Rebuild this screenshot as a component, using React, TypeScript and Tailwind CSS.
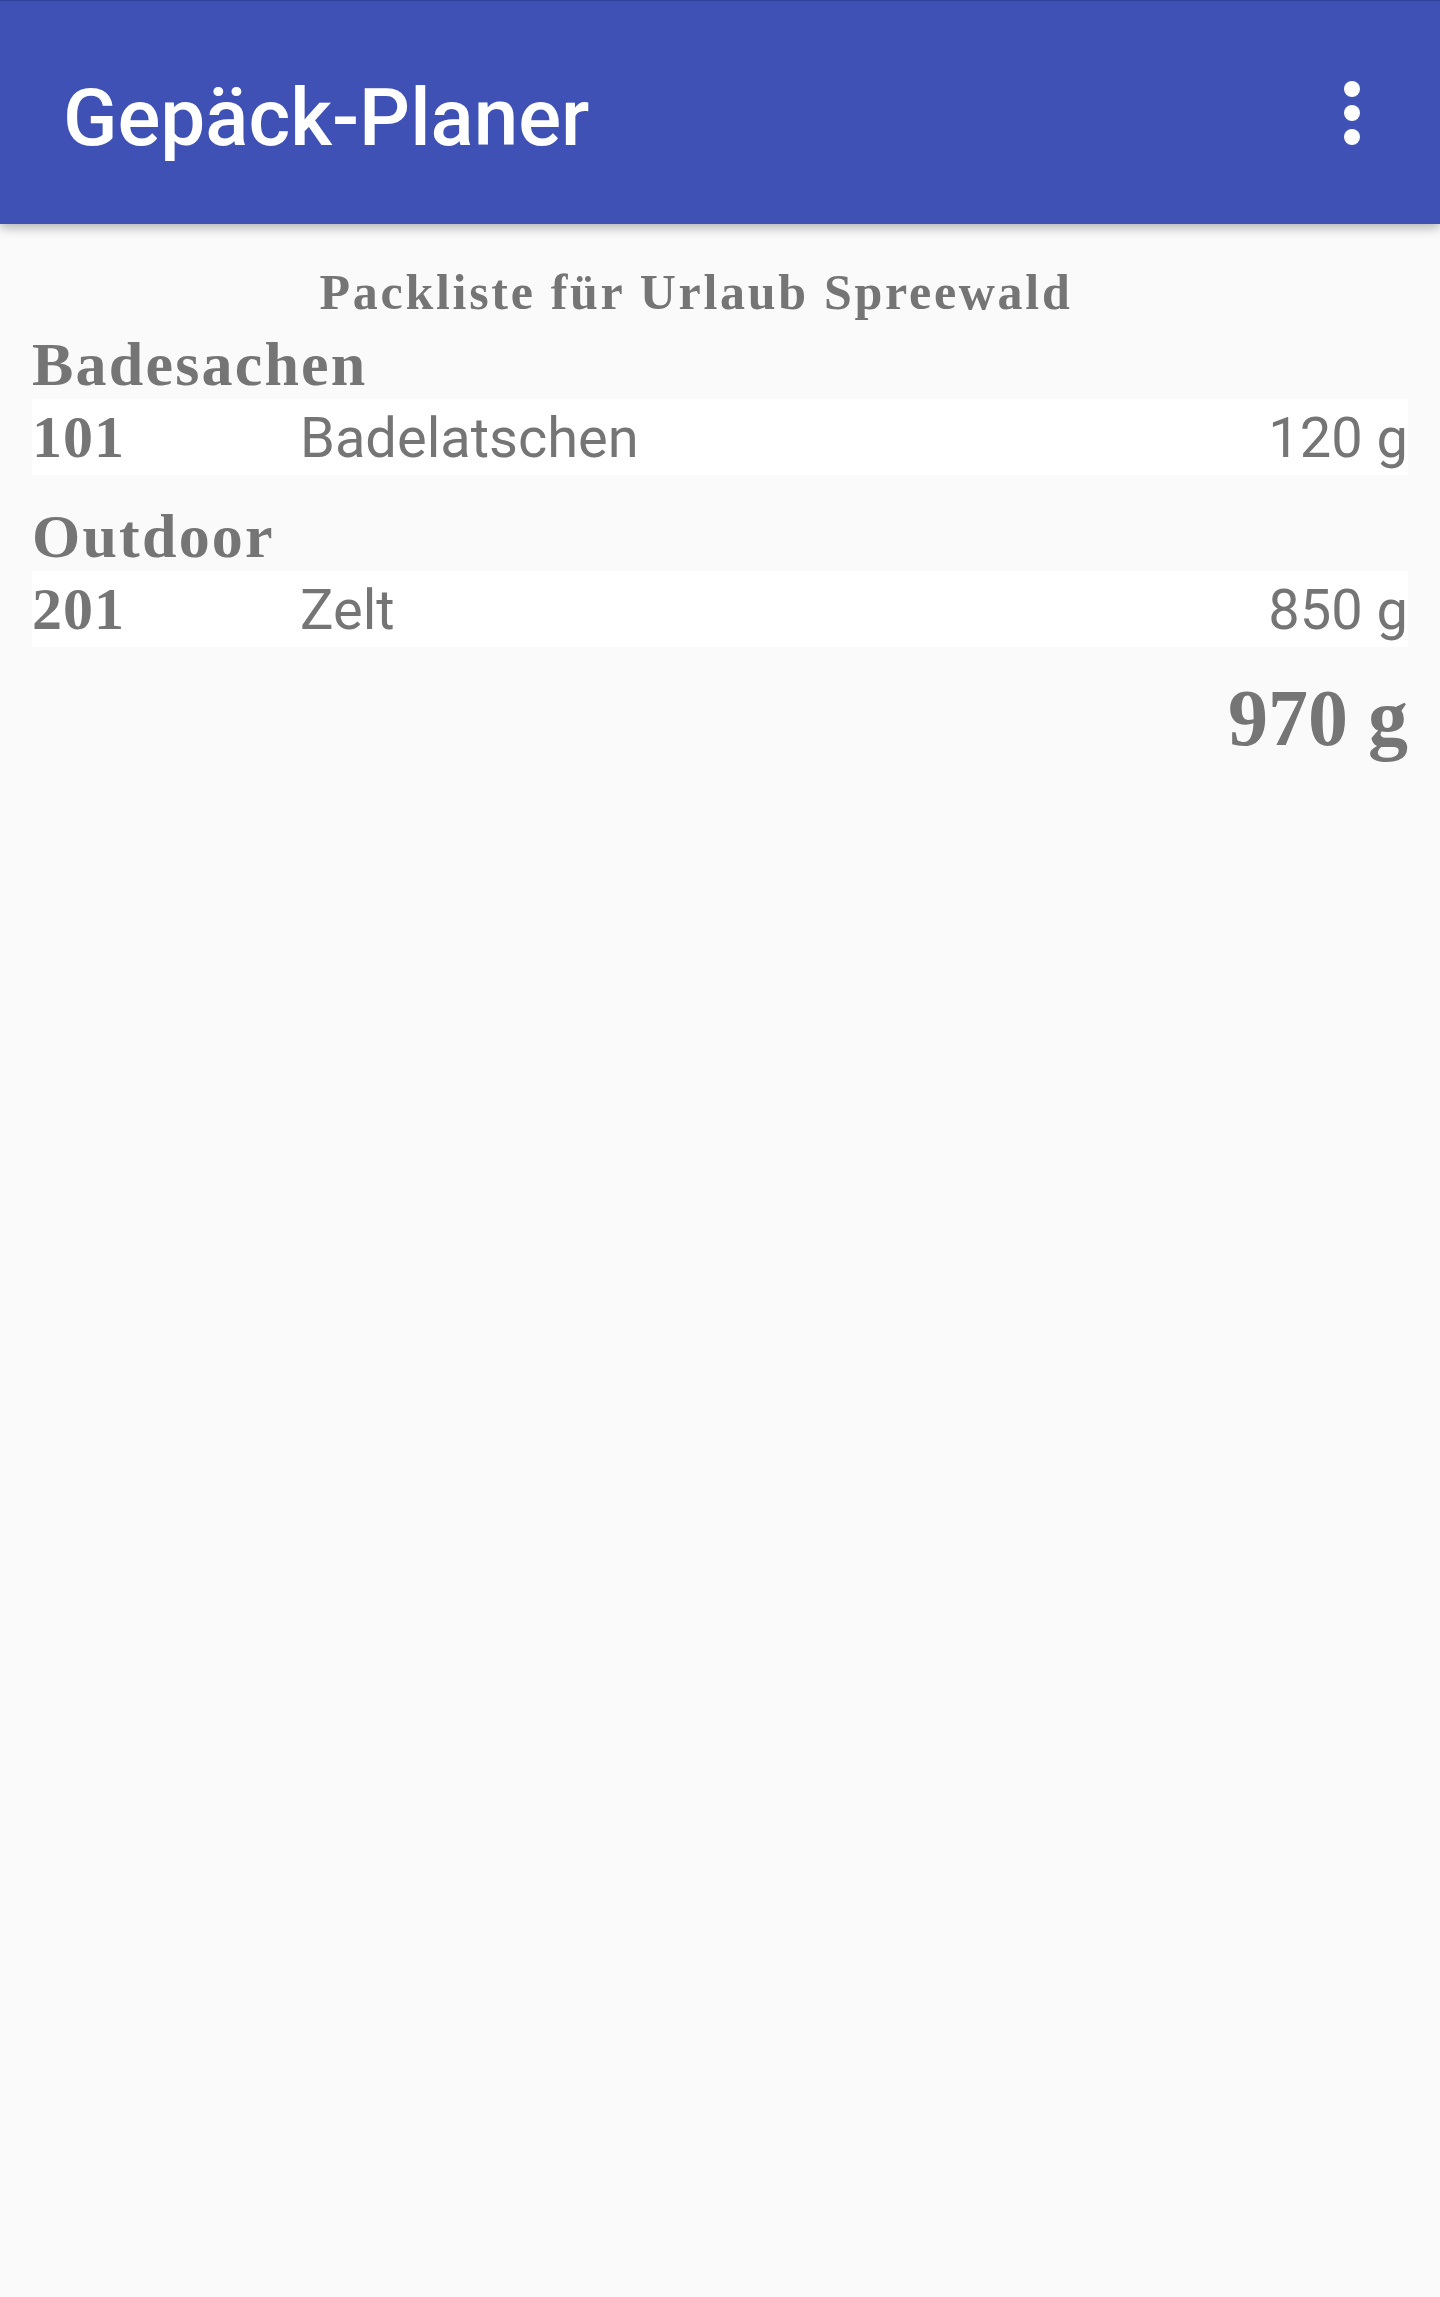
import React from 'react';

type Item = { nr: number; name: string; weight: number };
type Group = { title: string; items: Item[] };

const groups: Group[] = [
  { title: 'Badesachen', items: [{ nr: 101, name: 'Badelatschen', weight: 120 }] },
  { title: 'Outdoor', items: [{ nr: 201, name: 'Zelt', weight: 850 }] },
];

const serif = "font-['Liberation_Serif','Noto_Serif',serif]";
const sans = "font-['Roboto','Liberation_Sans',sans-serif]";

const App: React.FC = () => {
  const total = groups.reduce((s, g) => s + g.items.reduce((a, i) => a + i.weight, 0), 0);

  return (
    <div className="min-h-[2297px] w-full bg-[#fafafa] text-[#757575]">
      {/* Toolbar */}
      <header className="relative z-10 h-[224px] flex items-center justify-between bg-[#3f51b5] border-t border-[#32409a] pl-[63px] pr-[80px] shadow-[0_4px_10px_rgba(0,0,0,0.28)]">
        <h1 className={`${sans} mt-[10px] text-[80px] font-medium text-white`}>Gepäck-Planer</h1>
        <div className="flex flex-col gap-2">
          <span className="w-4 h-4 rounded-full bg-white"></span>
          <span className="w-4 h-4 rounded-full bg-white"></span>
          <span className="w-4 h-4 rounded-full bg-white"></span>
        </div>
      </header>

      <main className="px-8 pt-[40px]">
        <h2 className={`${serif} pr-12 text-center text-[50px] leading-[56px] font-bold tracking-[2.7px]`}>
          Packliste für Urlaub Spreewald
        </h2>

        <div className="mt-[9px] flex flex-col gap-[26px]">
          {groups.map((g) => (
            <section key={g.title}>
              <h3 className={`${serif} text-[62px] leading-[70px] font-bold tracking-[2.2px]`}>{g.title}</h3>
              {g.items.map((it) => (
                <div key={it.nr} className="flex items-baseline h-[76px] leading-[76px] bg-white">
                  <span className={`${serif} w-[268px] shrink-0 text-[60px] font-bold tracking-[1px]`}>{it.nr}</span>
                  <span className={`${sans} flex-1 text-[56px]`}>{it.name}</span>
                  <span className={`${sans} text-[56px]`}>{it.weight} g</span>
                </div>
              ))}
            </section>
          ))}

          <div className={`${serif} text-right text-[80px] leading-[90px] font-bold`}>{total} g</div>
        </div>
      </main>
    </div>
  );
};

export default App;
